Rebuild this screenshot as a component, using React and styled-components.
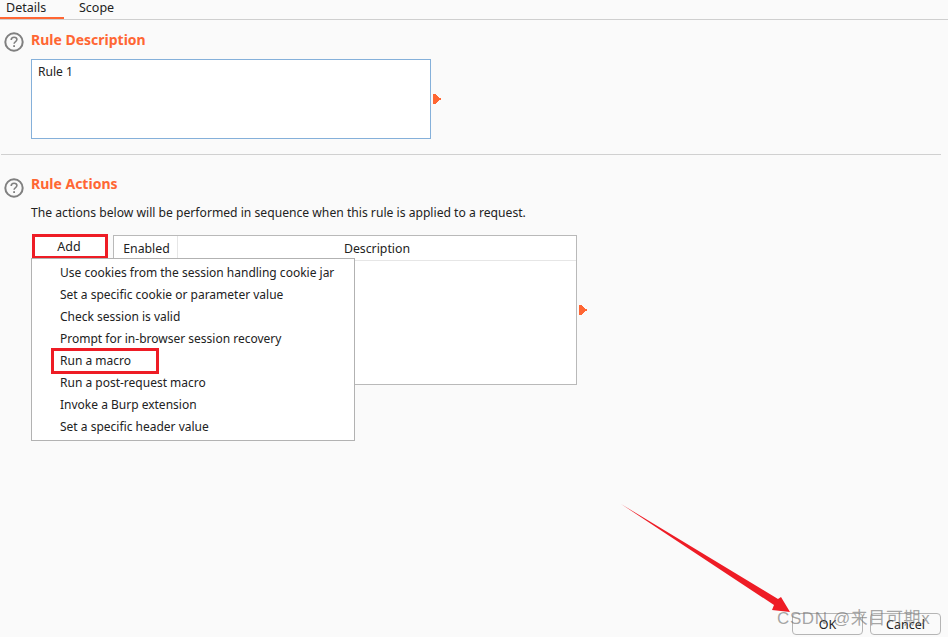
import styled, { createGlobalStyle } from 'styled-components';

const GlobalStyle = createGlobalStyle`
  html, body {
    margin: 0;
    padding: 0;
    background: #fafafa;
  }
  body {
    font-family: "Noto Sans", "Open Sans", sans-serif;
    font-size: 12.1px;
    color: #222;
  }
`;

const Page = styled.div`
  position: relative;
  width: 948px;
  height: 637px;
  overflow: hidden;
  background: #fafafa;
`;

const TabBar = styled.div`
  display: flex;
  height: 19px;
  border-bottom: 1px solid #cfcfcf;
  box-sizing: content-box;
`;

const Tab = styled.div`
  width: ${(p) => p.$width}px;
  height: 19px;
  box-sizing: border-box;
  padding-left: ${(p) => p.$pad}px;
  line-height: 16px;
  font-size: 12.5px;
  border-bottom: ${(p) => (p.$active ? '2px solid #ff6633' : 'none')};
`;

const Section = styled.section`
  padding: ${(p) => p.$top}px 0 0 4px;
`;

const Heading = styled.div`
  display: flex;
  align-items: flex-start;
  gap: 8px;
  height: 20px;
`;

const HelpIcon = styled.svg`
  width: 20px;
  height: 20px;
  margin-top: ${(p) => p.$drop}px;
  margin-right: -1px;
  flex: none;
`;

const Title = styled.h2`
  margin: 0;
  font-size: 14px;
  line-height: 20px;
  font-weight: 700;
  color: #ff6633;
`;

const Body = styled.div`
  display: flex;
  align-items: center;
  margin: 9px 0 0 27px;
`;

const TextBox = styled.div`
  width: 400px;
  height: 80px;
  box-sizing: border-box;
  padding: 4px 6px;
  background: #fff;
  border: 1px solid #85b0da;
  line-height: 15px;
`;

const Grip = styled.svg`
  width: 8px;
  height: 10px;
  margin-left: ${(p) => p.$gap}px;
  flex: none;
`;

const Divider = styled.hr`
  width: 940px;
  margin: 15px 0 0 1px;
  border: 0;
  border-top: 1px solid #d0d0d0;
`;

const Intro = styled.p`
  margin: 11px 0 0 27px;
  font-size: 12.15px;
  line-height: 16px;
`;

const ActionArea = styled.div`
  display: flex;
  align-items: flex-start;
  margin: 14px 0 0 27px;
`;

const AddButton = styled.div`
  width: 76px;
  height: 25px;
  box-sizing: border-box;
  margin: -1px 5px 0 1px;
  padding-right: 2px;
  background: #fff;
  border: 3px solid #ee1c25;
  text-align: center;
  line-height: 20px;
  font-size: 12.5px;
`;

const TableWrap = styled.div`
  display: flex;
  align-items: center;
`;

const Table = styled.div`
  width: 464px;
  height: 150px;
  box-sizing: border-box;
  background: #fff;
  border: 1px solid #b9b9b9;
`;

const TableHead = styled.div`
  display: flex;
  height: 25px;
  box-sizing: border-box;
  border-bottom: 1px solid #e6e6e6;
  line-height: 26px;
  font-size: 12.3px;
`;

const HeadCell = styled.div`
  width: ${(p) => p.$width}px;
  flex: ${(p) => (p.$width ? 'none' : 1)};
  box-sizing: border-box;
  padding-left: ${(p) => (p.$width ? 2 : 0)}px;
  text-align: center;
  border-right: ${(p) => (p.$width ? '1px solid #e6e6e6' : 'none')};
`;

const Menu = styled.ul`
  position: absolute;
  left: 31px;
  top: 258px;
  width: 324px;
  height: 183px;
  box-sizing: border-box;
  margin: 0;
  padding: 3px 0 0;
  list-style: none;
  background: #fff;
  border: 1px solid #b2b2b2;
  font-size: 12px;
`;

const MenuItem = styled.li`
  position: relative;
  height: 22px;
  padding-left: 28px;
  line-height: 22px;
  white-space: nowrap;
`;

const MacroMark = styled.span`
  position: absolute;
  left: 19px;
  top: -2px;
  width: 108px;
  height: 26px;
  box-sizing: border-box;
  border: 3px solid #ee1c25;
`;

const Footer = styled.div`
  position: absolute;
  right: 7px;
  bottom: 2px;
  display: flex;
  gap: 7px;
`;

const FooterButton = styled.button`
  width: 71px;
  height: 22px;
  padding: 0;
  background: #fafafa;
  border: 1px solid #b5b5b5;
  border-radius: 4px;
  font: inherit;
  font-size: 12.5px;
  line-height: 22px;
  color: #222;
`;

const Arrow = styled.svg`
  position: absolute;
  left: 615px;
  top: 498px;
  width: 185px;
  height: 125px;
`;

const Watermark = styled.div`
  position: absolute;
  left: 777px;
  top: 609px;
  font-family: "Liberation Sans", "Noto Sans CJK SC", sans-serif;
  font-size: 17px;
  line-height: 20px;
  letter-spacing: 0.6px;
  white-space: nowrap;
  color: rgba(110, 110, 110, 0.62);
`;

const menuItems = [
  'Use cookies from the session handling cookie jar',
  'Set a specific cookie or parameter value',
  'Check session is valid',
  'Prompt for in-browser session recovery',
  'Run a macro',
  'Run a post-request macro',
  'Invoke a Burp extension',
  'Set a specific header value',
];

function Help({ drop }) {
  return (
    <HelpIcon $drop={drop} viewBox="0 0 20 20">
      <circle cx="10" cy="10" r="8.7" fill="none" stroke="#808080" strokeWidth="2" />
      <path
        d="M7.2 8c0-1.7 1.2-2.8 2.9-2.8s2.8 1 2.8 2.4c0 2-2.8 2-2.8 4.2"
        fill="none"
        stroke="#808080"
        strokeWidth="1.6"
      />
      <rect x="9.2" y="13.2" width="1.8" height="1.8" fill="#808080" />
    </HelpIcon>
  );
}

function OrangeGrip({ gap }) {
  return (
    <Grip $gap={gap} viewBox="0 0 8 10">
      <path d="M0 0h3v1h1v1h1v1h1v1h2v2H6v1H5v1H4v1H3v1H0z" fill="#ff6633" />
    </Grip>
  );
}

export default function App() {
  return (
    <Page>
      <GlobalStyle />
      <TabBar>
        <Tab $width={64} $pad={6} $active>Details</Tab>
        <Tab $width={60} $pad={15}>Scope</Tab>
      </TabBar>

      <Section $top={10}>
        <Heading>
          <Help drop={2} />
          <Title>Rule Description</Title>
        </Heading>
        <Body>
          <TextBox>Rule 1</TextBox>
          <OrangeGrip gap={2} />
        </Body>
      </Section>

      <Divider />

      <Section $top={19}>
        <Heading>
          <Help drop={4} />
          <Title>Rule Actions</Title>
        </Heading>
        <Intro>The actions below will be performed in sequence when this rule is applied to a request.</Intro>
        <ActionArea>
          <AddButton>Add</AddButton>
          <TableWrap>
            <Table>
              <TableHead>
                <HeadCell $width={64}>Enabled</HeadCell>
                <HeadCell>Description</HeadCell>
              </TableHead>
            </Table>
            <OrangeGrip gap={2} />
          </TableWrap>
        </ActionArea>
      </Section>

      <Menu>
        {menuItems.map((item) => (
          <MenuItem key={item}>
            {item === 'Run a macro' && <MacroMark />}
            {item}
          </MenuItem>
        ))}
      </Menu>

      <Arrow viewBox="0 0 185 125">
        <path d="M6 6 L163 101 L166 99 L175 114 L157 112 L159 107 Z" fill="#ee1c25" />
      </Arrow>

      <Footer>
        <FooterButton>OK</FooterButton>
        <FooterButton>Cancel</FooterButton>
      </Footer>
      <Watermark>CSDN @来目可期x</Watermark>
    </Page>
  );
}
